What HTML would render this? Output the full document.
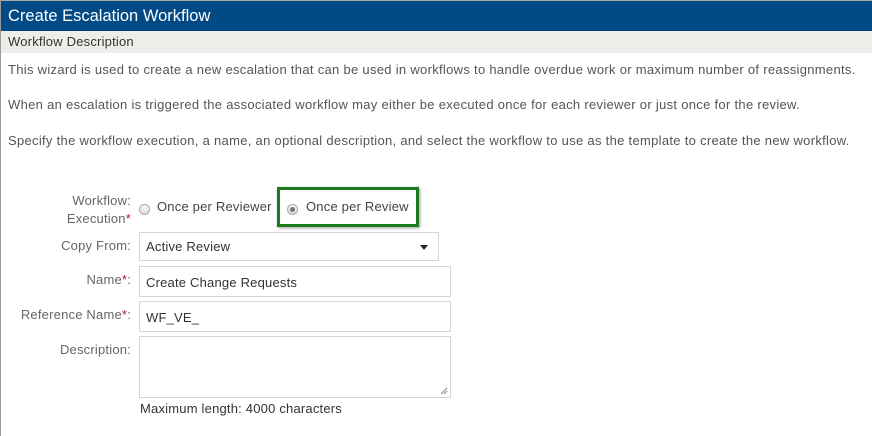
<!DOCTYPE html>
<html><head><style>
*{box-sizing:border-box;margin:0;padding:0}
body{width:872px;height:436px;overflow:hidden;background:#fff;font-family:"Liberation Sans",sans-serif;font-size:13px;color:#555;position:relative}
.a{position:absolute}
.hdr{left:0;top:1px;width:872px;height:30px;background:#024a85;color:#fff;font-size:16.5px;line-height:30px;padding-left:8px}
.sub{left:0;top:31px;width:872px;height:22px;background:#eeedea;color:#333;line-height:22px;padding-left:8px;letter-spacing:.2px}
.p{left:8px;color:#555;letter-spacing:.3px}
.lbl{right:741px;text-align:right;color:#666;white-space:nowrap;letter-spacing:.2px}
.req{color:#a0223a}
.in{border:1px solid #d6d6d6;background:#fff;color:#333;padding-left:6px;letter-spacing:.2px}
.rad{width:11px;height:11px;border:1px solid #aaa;border-radius:50%;background:linear-gradient(#fafafa,#ddd)}
</style></head><body>
<div class="a" style="left:0;top:0;width:872px;height:1px;background:#aaa"></div>
<div class="a hdr">Create Escalation Workflow</div>
<div class="a sub">Workflow Description</div>
<div class="a" style="left:0;top:0;width:1px;height:436px;background:#999"></div>
<div class="a p" style="top:62px">This wizard is used to create a new escalation that can be used in workflows to handle overdue work or maximum number of reassignments.</div>
<div class="a p" style="top:97px">When an escalation is triggered the associated workflow may either be executed once for each reviewer or just once for the review.</div>
<div class="a p" style="top:133px">Specify the workflow execution, a name, an optional description, and select the workflow to use as the template to create the new workflow.</div>

<div class="a lbl" style="top:192px;line-height:18px">Workflow:<br>Execution<span class="req">*</span></div>
<div class="a rad" style="left:139px;top:204px"></div>
<div class="a" style="left:157px;top:199px;color:#444;letter-spacing:.2px">Once per Reviewer</div>
<div class="a" style="left:277px;top:187px;width:142px;height:40px;border:3px solid #1d7a1d;box-shadow:1px 1px 3px rgba(0,0,0,.4)"></div>
<div class="a rad" style="left:287px;top:204px"><div style="width:5px;height:5px;border-radius:50%;background:#777;margin:2px"></div></div>
<div class="a" style="left:306px;top:199px;color:#444;letter-spacing:.2px">Once per Review</div>

<div class="a lbl" style="top:238px">Copy From:</div>
<div class="a in" style="left:139px;top:232px;width:300px;height:29px;line-height:28px">Active Review<span style="position:absolute;right:10px;top:12px;border:4px solid transparent;border-top:5px solid #222"></span></div>

<div class="a lbl" style="top:272px">Name<span class="req">*</span>:</div>
<div class="a in" style="left:139px;top:266px;width:312px;height:31px;line-height:31px">Create Change Requests</div>

<div class="a lbl" style="top:307px">Reference Name<span class="req">*</span>:</div>
<div class="a in" style="left:139px;top:301px;width:312px;height:31px;line-height:31px">WF_VE_</div>

<div class="a lbl" style="top:342px">Description:</div>
<div class="a in" style="left:139px;top:336px;width:312px;height:62px"><svg class="a" style="right:2px;bottom:2px" width="8" height="8"><path d="M1 7L7 1M4 7L7 4" stroke="#888" stroke-width="1"/></svg></div>
<div class="a" style="left:140px;top:401px;color:#333;letter-spacing:.2px">Maximum length: 4000 characters</div>
</body></html>
